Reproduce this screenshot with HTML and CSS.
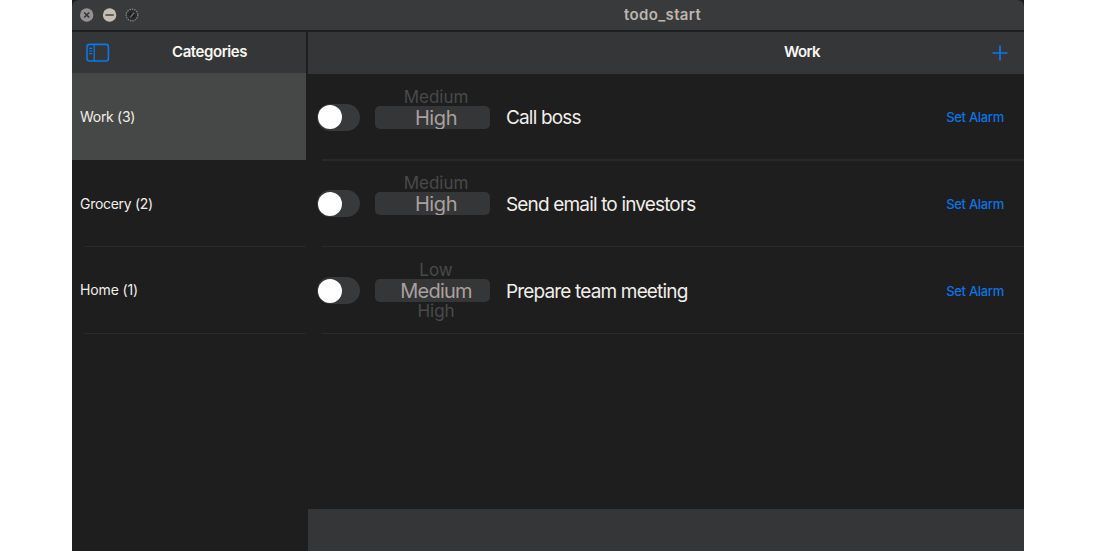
FILE: index.html
```html
<!DOCTYPE html>
<html lang="en">
<head>
<meta charset="utf-8">
<title>todo_start</title>
<link rel="stylesheet" href="styles.css">
</head>
<body>
<div class="window">
  <header class="titlebar">
    <svg class="controls" width="60" height="16" viewBox="0 0 60 16">
      <circle cx="6.7" cy="8" r="6.7" fill="#979090"/>
      <path d="M4.2 5.5l5 5M9.2 5.5l-5 5" stroke="#343537" stroke-width="1.6"/>
      <circle cx="29.6" cy="8" r="6.7" fill="#c5bdb3"/>
      <path d="M25.4 8h8.4" stroke="#4a4a49" stroke-width="1.6"/>
      <circle cx="52" cy="8" r="5.8" fill="#2b2c2d" stroke="#858180" stroke-width="1.3" stroke-dasharray="1.5 .9"/>
      <path d="M50.2 10.2l4-4.4" fill="none" stroke="#6b6968" stroke-width="1.6"/>
      <path d="M49.4 9.8V6.4l3-1z" fill="#151617"/>
      <path d="M54.8 6.6v3.2l-3 1z" fill="#151617"/>
    </svg>
    <h1 class="title">todo_start</h1>
  </header>
  <div class="panes">
    <aside class="sidebar">
      <div class="nav nav-side">
        <svg class="toggle-icon" width="24" height="20" viewBox="0 0 24 20" fill="none" stroke="#0b78e8">
          <rect x="1" y="1.4" width="21.4" height="16.6" rx="2.4" stroke-width="1.6"/>
          <path d="M8.2 1.5v16.5" stroke-width="1.3"/>
          <path d="M3.2 5.4h3M3.2 8h3M3.2 10.6h3" stroke-width="1.1"/>
        </svg>
        <h2 class="nav-title">Categories</h2>
      </div>
      <ul class="list">
        <li class="category selected">Work (3)</li>
        <li class="category">Grocery (2)</li>
        <li class="category home">Home (1)</li>
      </ul>
    </aside>
    <main class="detail">
      <div class="nav nav-detail">
        <h2 class="nav-title">Work</h2>
        <svg class="add" width="16" height="16" viewBox="0 0 16 16"><path d="M8 .4v15.2M.4 8h15.2" stroke="#0b78e8" stroke-width="1.7"/></svg>
      </div>
      <ul class="list tasks">
        <li class="task first">
          <span class="switch"><span class="knob"></span></span>
          <div class="wheel">
            <span class="option above">Medium</span>
            <span class="option current">High</span>
          </div>
          <span class="name">Call boss</span>
          <span class="alarm">Set Alarm</span>
        </li>
        <li class="task">
          <span class="switch"><span class="knob"></span></span>
          <div class="wheel">
            <span class="option above">Medium</span>
            <span class="option current">High</span>
          </div>
          <span class="name">Send email to investors</span>
          <span class="alarm">Set Alarm</span>
        </li>
        <li class="task">
          <span class="switch"><span class="knob"></span></span>
          <div class="wheel">
            <span class="option above">Low</span>
            <span class="option current current-wide">Medium</span>
            <span class="option below">High</span>
          </div>
          <span class="name">Prepare team meeting</span>
          <span class="alarm">Set Alarm</span>
        </li>
      </ul>
      <footer class="toolbar"></footer>
    </main>
  </div>
</div>
</body>
</html>
```
FILE: styles.css
```css
* { box-sizing: border-box; }
body {
  margin: 0;
  background: #fff;
  font-family: Inter, "Liberation Sans", sans-serif;
  color: #f2eeea;
  overflow: hidden;
}
h1, h2, ul { margin: 0; padding: 0; }
ul { list-style: none; }
svg { display: block; flex: none; }
.window {
  display: flex;
  flex-direction: column;
  width: 952px;
  height: 551px;
  margin: 0 auto;
  overflow: hidden;
  background: #1e1e1e;
}
.titlebar {
  display: grid;
  grid-template-columns: 60px 1fr;
  align-items: center;
  height: 30px;
  padding-left: 8px;
  background: #393a3c;
  border-radius: 7px 7px 0 0;
}
.title {
  padding-left: 484px;
  font-size: 15px;
  line-height: 18px;
  font-weight: 600;
  letter-spacing: .35px;
  color: #bdb6af;
}
.panes {
  display: grid;
  grid-template-columns: 234px 716px;
  gap: 2px;
  height: 519px;
  margin-top: 2px;
}
.nav {
  display: grid;
  align-items: center;
  background: #353638;
}
.nav-side { height: 41px; grid-template-columns: 24px 1fr; padding-left: 14px; }
.nav-detail { height: 42px; grid-template-columns: 1fr 16px; padding-right: 16px; }
.nav-title {
  padding-bottom: 1px;
  font-size: 15px;
  line-height: 18px;
  font-weight: 600;
  letter-spacing: -.42px;
  color: #fbf8f3;
}
.nav-side .nav-title { padding-left: 62px; }
.nav-detail .nav-title { padding: 0 0 2px 476px; letter-spacing: -.6px; }
.category {
  position: relative;
  display: flex;
  align-items: center;
  height: 87px;
  padding-left: 8px;
  font-size: 14px;
  line-height: 18px;
  letter-spacing: -.3px;
}
.home { letter-spacing: -.12px; padding-bottom: 1px; }
.selected { background: #464847; }
.category:not(.selected)::after, .task::after {
  content: "";
  position: absolute;
  bottom: 0;
  right: 0;
  height: 1px;
  background: #292a2a;
}
.category::after { left: 12px; }
.task::after { left: 14px; }
.task.first::after { height: 2px; bottom: -1px; background: #272828; }
.detail { display: flex; flex-direction: column; }
.tasks { flex: 1; margin-top: -1px; }
.task {
  position: relative;
  display: grid;
  grid-template-columns: 43px 115px 1fr auto;
  align-items: center;
  height: 87px;
  padding: 0 20px 0 9px;
}
.first { padding-top: 1px; }
.switch {
  display: flex;
  align-items: center;
  width: 43px;
  height: 27px;
  padding-left: 1px;
  border-radius: 14px;
  background: #38393b;
}
.knob { width: 24px; height: 24px; border-radius: 50%; background: #fff; }
.wheel {
  display: grid;
  grid-template-rows: 20px 23px 20px;
  width: 115px;
  margin-left: 15px;
}
.option { text-align: center; padding-left: 7px; white-space: nowrap; }
.above, .below { font-size: 17px; color: #484a4a; }
.above { padding-top: 3px; line-height: 17px; }
.below { padding-top: 1px; line-height: 17px; }
.current {
  overflow: hidden;
  height: 23px;
  padding-top: 1px;
  border-radius: 5px;
  background: #353638;
  color: #aaa09d;
  font-size: 20px;
  line-height: 22px;
  letter-spacing: -.4px;
}
.current-wide { letter-spacing: -.75px; }
.name {
  padding: 2px 0 0 31px;
  font-size: 19px;
  line-height: 24px;
  letter-spacing: -.84px;
  white-space: nowrap;
}
.first .name { padding-top: 1px; }
.alarm {
  font-size: 13px;
  line-height: 16px;
  font-weight: 500;
  letter-spacing: -.3px;
  color: #0b74e3;
}
.toolbar { height: 42px; background: #353638; }
```
